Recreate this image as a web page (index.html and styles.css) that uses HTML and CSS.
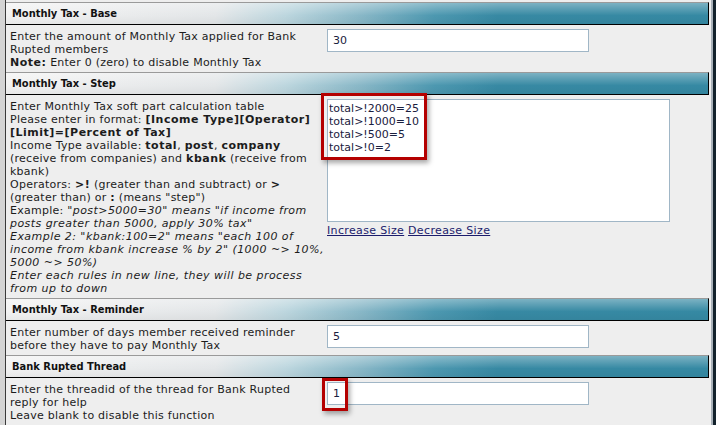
FILE: index.html
```html
<!DOCTYPE html>
<html>
<head>
<meta charset="utf-8">
<link rel="stylesheet" href="styles.css">
</head>
<body>
<div class="win">
  <div class="page">
    <div class="hd">Monthly Tax - Base</div>
    <div class="row">
      <div class="desc">Enter the amount of Monthly Tax applied for Bank<br>Rupted members<br><b>Note:</b> Enter 0 (zero) to disable Monthly Tax</div>
      <div class="ctl"><input class="txt" type="text" value="30"></div>
    </div>

    <div class="hd">Monthly Tax - Step</div>
    <div class="row">
      <div class="desc">Enter Monthly Tax soft part calculation table<br>Please enter in format: <b>[Income Type][Operator]</b><br><b>[Limit]=[Percent of Tax]</b><br>Income Type available: <b>total</b>, <b>post</b>, <b>company</b><br>(receive from companies) and <b>kbank</b> (receive from<br>kbank)<br>Operators: <b>&gt;!</b> (greater than and subtract) or <b>&gt;</b><br>(greater than) or <b>:</b> (means "step")<br>Example: <i>"post&gt;5000=30" means "if income from<br>posts greater than 5000, apply 30% tax"<br>Example 2: "kbank:100=2" means "each 100 of<br>income from kbank increase % by 2" (1000 ~&gt; 10%,<br>5000 ~&gt; 50%)<br>Enter each rules in new line, they will be process<br>from up to down</i></div>
      <div class="ctl">
        <textarea class="area">total&gt;!2000=25
total&gt;!1000=10
total&gt;!500=5
total&gt;!0=2</textarea>
        <div class="links"><a href="#">Increase Size</a> <a href="#">Decrease Size</a></div>
      </div>
    </div>

    <div class="hd">Monthly Tax - Reminder</div>
    <div class="row">
      <div class="desc">Enter number of days member received reminder<br>before they have to pay Monthly Tax</div>
      <div class="ctl"><input class="txt" type="text" value="5"></div>
    </div>

    <div class="hd">Bank Rupted Thread</div>
    <div class="row">
      <div class="desc">Enter the threadid of the thread for Bank Rupted<br>reply for help<br>Leave blank to disable this function</div>
      <div class="ctl"><input class="txt" type="text" value="1"></div>
    </div>
  </div>
  <div class="mark mark-area"></div>
  <div class="mark mark-thread"></div>
</div>
</body>
</html>
```

FILE: styles.css
```css
html, body {
  margin: 0;
  padding: 0;
}
body {
  width: 716px;
  height: 425px;
  overflow: hidden;
  font-family: "DejaVu Sans", Verdana, sans-serif;
  font-size: 11px;
  line-height: 13px;
  color: #1c1c1c;
}
.win {
  position: relative;
  display: flex;
  height: 425px;
  padding-left: 5px;
  background: #d4d4d4;
  border-right: 3px solid #13222c;
  box-sizing: border-box;
}
.page {
  flex: 1;
  border-left: 1px solid #3a3a3a;
  border-right: 2px solid #a9b1b9;
  background: #eeeeee;
  padding-top: 2px;
  overflow: hidden;
}
.hd {
  height: 21px;
  line-height: 22px;
  margin-right: 2px;
  padding-left: 6px;
  border-top: 1px solid #9a9a9a;
  border-bottom: 1px solid #000;
  border-right: 1px solid #000;
  font-family: "DejaVu Sans Condensed", "DejaVu Sans", sans-serif;
  font-stretch: condensed;
  font-weight: bold;
  color: #111;
  background:
    linear-gradient(to bottom, rgba(255,255,255,0.35), rgba(255,255,255,0) 60%, rgba(0,0,0,0.04)),
    linear-gradient(100deg, #f2f2f2 0%, #e3e6e8 30%, #bcd6de 40%, #86b6c6 51%, #4d98b0 61%, #3789a3 70%, #3589a3 100%);
}
.row {
  display: grid;
  grid-template-columns: 321px 1fr;
}
.desc {
  padding: 5px 4px 3px 4px;
  white-space: nowrap;
  letter-spacing: 0.25px;
}
.desc b {
  letter-spacing: 0.5px;
}
.desc i {
  letter-spacing: 0.45px;
}
.ctl {
  padding: 4px 0;
}
.txt {
  display: block;
  box-sizing: border-box;
  width: 262px;
  height: 23px;
  margin: 0;
  padding: 0 5px;
  border: 1px solid #a0b6c6;
  background: #fff;
  font-family: "DejaVu Sans", Verdana, sans-serif;
  font-size: 11px;
  color: #1a2040;
  outline: none;
}
.area {
  display: block;
  box-sizing: border-box;
  width: 343px;
  height: 123px;
  margin: 0;
  padding: 2px 1px;
  border: 1px solid #a0b6c6;
  background: #fff;
  font-family: "DejaVu Sans", Verdana, sans-serif;
  font-size: 11px;
  line-height: 13px;
  color: #1a2040;
  resize: none;
  outline: none;
}
.links {
  margin-top: 2px;
  letter-spacing: 0.35px;
}
.links a {
  color: #1c1c6c;
  text-decoration: underline;
}
.mark {
  position: absolute;
  box-sizing: border-box;
  border: 3px solid #b40000;
  box-shadow: 2px 3px 5px rgba(0,0,0,0.35);
}
.mark-area {
  left: 321px;
  top: 93px;
  width: 106px;
  height: 67px;
}
.mark-thread {
  left: 322px;
  top: 378px;
  width: 26px;
  height: 33px;
}
```
